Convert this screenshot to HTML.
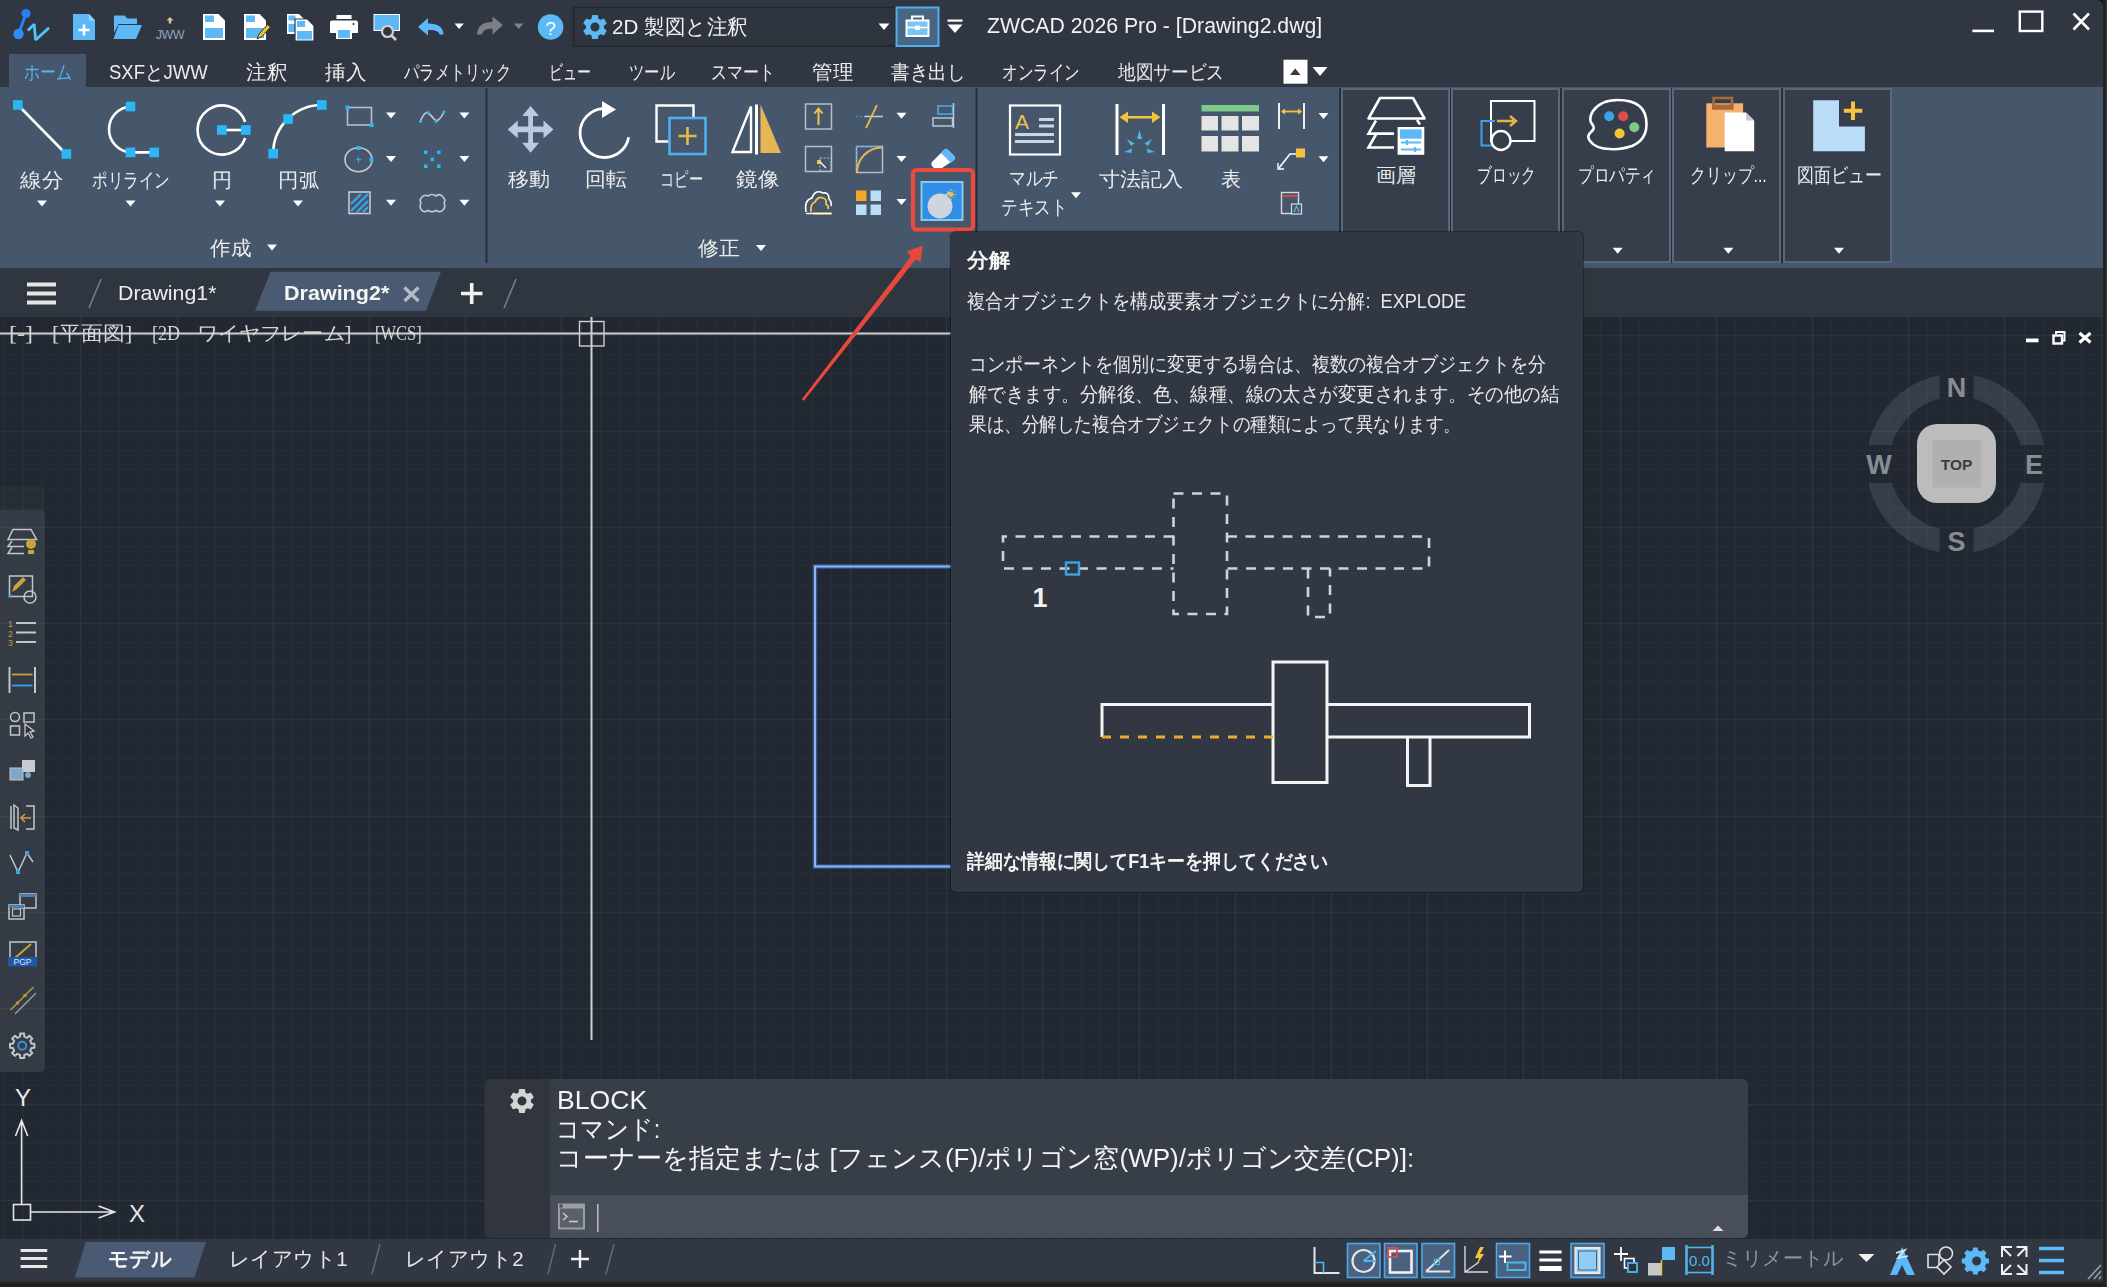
<!DOCTYPE html>
<html><head><meta charset="utf-8">
<style>
*{margin:0;padding:0;box-sizing:border-box}
html,body{width:2107px;height:1287px;overflow:hidden;background:#15171b;font-family:"Liberation Sans",sans-serif;color:#ececec}
.a{position:absolute}
.t{position:absolute;white-space:nowrap;line-height:1}
svg{position:absolute;overflow:visible}
</style></head><body>
<!-- BACKGROUNDS -->
<div class="a" style="left:0;top:0;width:2103px;height:87px;background:#313742;border-top-right-radius:6px"></div>
<div class="a" style="left:0;top:87px;width:2103px;height:181px;background:#46566b"></div>
<div class="a" style="left:0;top:268px;width:2103px;height:49px;background:#30363f"></div>
<div class="a" id="canvas" style="left:0;top:317px;width:2103px;height:922px;background:#222831;overflow:hidden">
<svg width="2103" height="922" style="left:0;top:0">
<path d="M3.5 0V922M23.5 0V922M42.5 0V922M61.5 0V922M100.5 0V922M119.5 0V922M138.5 0V922M157.5 0V922M196.5 0V922M215.5 0V922M234.5 0V922M254.5 0V922M292.5 0V922M311.5 0V922M331.5 0V922M350.5 0V922M388.5 0V922M407.5 0V922M427.5 0V922M446.5 0V922M484.5 0V922M504.5 0V922M523.5 0V922M542.5 0V922M581.5 0V922M600.5 0V922M619.5 0V922M638.5 0V922M677.5 0V922M696.5 0V922M715.5 0V922M735.5 0V922M773.5 0V922M792.5 0V922M812.5 0V922M831.5 0V922M869.5 0V922M888.5 0V922M908.5 0V922M927.5 0V922M965.5 0V922M985.5 0V922M1004.5 0V922M1023.5 0V922M1062.5 0V922M1081.5 0V922M1100.5 0V922M1119.5 0V922M1158.5 0V922M1177.5 0V922M1196.5 0V922M1216.5 0V922M1254.5 0V922M1273.5 0V922M1293.5 0V922M1312.5 0V922M1350.5 0V922M1369.5 0V922M1389.5 0V922M1408.5 0V922M1446.5 0V922M1466.5 0V922M1485.5 0V922M1504.5 0V922M1543.5 0V922M1562.5 0V922M1581.5 0V922M1600.5 0V922M1639.5 0V922M1658.5 0V922M1677.5 0V922M1697.5 0V922M1735.5 0V922M1754.5 0V922M1774.5 0V922M1793.5 0V922M1831.5 0V922M1850.5 0V922M1870.5 0V922M1889.5 0V922M1927.5 0V922M1947.5 0V922M1966.5 0V922M1985.5 0V922M2024.5 0V922M2043.5 0V922M2062.5 0V922M2081.5 0V922M0 37.5H2103M0 56.5H2103M0 75.5H2103M0 95.5H2103M0 133.5H2103M0 152.5H2103M0 172.5H2103M0 191.5H2103M0 229.5H2103M0 248.5H2103M0 268.5H2103M0 287.5H2103M0 325.5H2103M0 345.5H2103M0 364.5H2103M0 383.5H2103M0 422.5H2103M0 441.5H2103M0 460.5H2103M0 479.5H2103M0 518.5H2103M0 537.5H2103M0 556.5H2103M0 576.5H2103M0 614.5H2103M0 633.5H2103M0 653.5H2103M0 672.5H2103M0 710.5H2103M0 729.5H2103M0 749.5H2103M0 768.5H2103M0 806.5H2103M0 826.5H2103M0 845.5H2103M0 864.5H2103M0 903.5H2103M0 922.5H2103" stroke="#282e37" stroke-width="1" fill="none"/>
<path d="M80.5 0V922M177.5 0V922M273.5 0V922M369.5 0V922M465.5 0V922M561.5 0V922M658.5 0V922M754.5 0V922M850.5 0V922M946.5 0V922M1042.5 0V922M1139.5 0V922M1235.5 0V922M1331.5 0V922M1427.5 0V922M1523.5 0V922M1620.5 0V922M1716.5 0V922M1812.5 0V922M1908.5 0V922M2004.5 0V922M2101.5 0V922M0 18.5H2103M0 114.5H2103M0 210.5H2103M0 306.5H2103M0 402.5H2103M0 499.5H2103M0 595.5H2103M0 691.5H2103M0 787.5H2103M0 883.5H2103" stroke="#2e343f" stroke-width="1.6" fill="none"/>
</svg>
</div>
<div class="a" style="left:0;top:1239px;width:2103px;height:41.5px;background:#323843"></div>
<div class="a" style="left:0;top:1280.5px;width:2107px;height:2.5px;background:#2c2c2c"></div>
<div class="a" style="left:0;top:1283px;width:2107px;height:4px;background:#1f1f1f"></div>
<div class="a" style="left:2103px;top:0;width:4px;height:1287px;background:#222428"></div>
<div class="a" style="left:2105.5px;top:0;width:1.5px;height:1287px;background:#3a3a3b"></div>

<!-- TITLEBAR -->
<svg width="2107" height="50" style="left:0;top:0">
 <!-- logo -->
 <line x1="26" y1="13.5" x2="18.5" y2="34" stroke="#2a7ff0" stroke-width="3"/>
 <circle cx="26" cy="13.5" r="4.6" fill="#2a7ff0"/>
 <circle cx="18.5" cy="34" r="5.2" fill="#2b8ef2"/>
 <polyline points="27.8,30.6 34.2,24.2 35.6,39.9 49.1,27.8" stroke="#4fc3f7" stroke-width="2.8" fill="none" stroke-linejoin="bevel"/>
 <!-- new -->
 <path d="M73 14H89L95 20.5V40H73Z" fill="#5cb9f6"/>
 <path d="M89 14V20.5H95Z" fill="#9ad4fa"/>
 <path d="M84 24.5V35.5M78.5 30H89.5" stroke="#fff" stroke-width="2.6"/>
 <!-- open -->
 <path d="M114 15.5H124.5L127.5 18.5H137V24H118.5L114 33Z" fill="#5cb9f6"/>
 <path d="M118.5 25H142L136 39H113.5Z" fill="#5cb9f6"/>
 <!-- jww -->
 <path d="M170 17L166.5 20.5H168.8V23.5H171.2V20.5H173.5Z" fill="#d7c69a"/>
 <text x="170" y="39" font-size="12.5" fill="#8da3bf" text-anchor="middle" font-family="Liberation Sans" letter-spacing="-0.5">JWW</text>
 <!-- save -->
 <path d="M203 14H218.5L225 20.5V40H203Z" fill="#fff"/>
 <rect x="205" y="15.5" width="9" height="6.5" fill="#5cb9f6"/>
 <rect x="205" y="28" width="18" height="10" fill="#5cb9f6"/>
 <!-- save as -->
 <path d="M244 14H259.5L266 20.5V40H244Z" fill="#fff"/>
 <rect x="246" y="15.5" width="9" height="6.5" fill="#5cb9f6"/>
 <rect x="246" y="28" width="18" height="10" fill="#5cb9f6"/>
 <path d="M257 39L259 34L267.5 24.5L270.5 27L262 36.5Z" fill="#f2c12e" stroke="#2f343e" stroke-width="1"/>
 <!-- save multiple -->
 <path d="M287 14H299L304 19V34H287Z" fill="#fff"/>
 <rect x="288.5" y="15.5" width="7" height="5" fill="#5cb9f6"/>
 <rect x="288.5" y="24" width="14" height="8" fill="#5cb9f6"/>
 <path d="M295 19H307.5L314 25.5V41H295Z" fill="#fff" stroke="#2f343e" stroke-width="1.2"/>
 <rect x="297" y="21" width="8" height="6" fill="#5cb9f6"/>
 <rect x="297" y="31" width="15" height="8.5" fill="#5cb9f6"/>
 <!-- print -->
 <rect x="336.5" y="15" width="15" height="4" fill="#fff"/>
 <path d="M330 22.5Q330 20.5 332 20.5H356Q358 20.5 358 22.5V33H330Z" fill="#fff"/>
 <rect x="336" y="28" width="16" height="11" fill="#fff"/>
 <rect x="338" y="30" width="12" height="8" fill="#5cb9f6"/>
 <circle cx="353.5" cy="24" r="1" fill="#2f343e"/>
 <!-- plot preview -->
 <rect x="373.5" y="14" width="26.5" height="17" fill="#fff"/>
 <rect x="374.5" y="15" width="24.5" height="15" fill="#5cb9f6"/>
 <circle cx="387.5" cy="31.5" r="5.5" fill="#2f343e" stroke="#d0d0d0" stroke-width="2.2"/>
 <line x1="391.5" y1="35.5" x2="396" y2="40" stroke="#d0d0d0" stroke-width="2.6"/>
 <!-- undo -->
 <path d="M418 27L428 18V23.5Q443 23.5 443.5 34.5H439.5Q439 29.5 428 30V35.5Z" fill="#5cb9f6"/>
 <path d="M454.5 23.5H463.8L459.1 29Z" fill="#fff"/>
 <!-- redo -->
 <path d="M503 25L492.5 16.5V22Q477.5 22 477 34.5H482Q482.5 28.5 492.5 28.5V34.5Z" fill="#7c7f85"/>
 <path d="M514 23.5H523.5L518.7 29Z" fill="#808389"/>
 <!-- help -->
 <circle cx="550.6" cy="27" r="12.8" fill="#5cb9f6"/>
 <text x="550.6" y="34.5" font-size="19" fill="#fff" text-anchor="middle" font-family="Liberation Sans">?</text>
 <!-- combo -->
 <rect x="573.5" y="7.5" width="322" height="38.5" fill="#2f353f" stroke="#22262d" stroke-width="1.5"/>
 <path d="M878.5 23.5H889.5L884 30Z" fill="#fff"/>
 <!-- toolbox -->
 <rect x="896.5" y="7.5" width="42" height="38.5" fill="#476684" stroke="#4fb0ee" stroke-width="2"/>
 <rect x="906.5" y="20.5" width="22" height="15.5" fill="#7cc4f2" stroke="#fff" stroke-width="2"/>
 <path d="M912 20V16.5H923V20" stroke="#fff" stroke-width="2" fill="none"/>
 <path d="M906.5 27.5H928.5" stroke="#fff" stroke-width="1.6"/>
 <rect x="915" y="25.5" width="5" height="4.5" fill="#fff"/>
 <!-- workspace menu -->
 <rect x="947.5" y="19.5" width="15" height="2.2" fill="#fff"/>
 <path d="M947.5 24.5H962.5L955 33Z" fill="#fff"/>
 <!-- window controls -->
 <rect x="1972.4" y="29.6" width="21.6" height="2.6" fill="#fff"/>
 <rect x="2019.8" y="11.6" width="22.5" height="19.4" fill="none" stroke="#fff" stroke-width="2.4"/>
 <path d="M2073.5 13.5L2089 29.5M2089 13.5L2073.5 29.5" stroke="#fff" stroke-width="2.6"/>
</svg>
<!-- gear in combo -->
<svg width="30" height="30" style="left:580px;top:12px" viewBox="0 0 24 24">
 <path fill="#5cb9f6" d="M19.14 12.94c.04-.3.06-.61.06-.94 0-.32-.02-.64-.07-.94l2.03-1.58a.49.49 0 0 0 .12-.61l-1.92-3.32a.49.49 0 0 0-.59-.22l-2.39.96c-.5-.38-1.03-.7-1.62-.94l-.36-2.54a.48.48 0 0 0-.48-.41h-3.84c-.24 0-.43.17-.47.41l-.36 2.54c-.59.24-1.13.57-1.62.94l-2.39-.96a.48.48 0 0 0-.59.22L2.74 8.87c-.12.21-.08.47.12.61l2.03 1.58c-.05.3-.09.63-.09.94s.02.64.07.94l-2.03 1.58a.49.49 0 0 0-.12.61l1.92 3.32c.12.22.37.29.59.22l2.39-.96c.5.38 1.03.7 1.62.94l.36 2.54c.05.24.24.41.48.41h3.84c.24 0 .44-.17.47-.41l.36-2.54c.59-.24 1.13-.56 1.62-.94l2.39.96c.22.08.47 0 .59-.22l1.92-3.32c.12-.22.07-.47-.12-.61l-2.01-1.58zM12 15.6A3.6 3.6 0 1 1 12 8.4a3.6 3.6 0 0 1 0 7.2z"/>
</svg>
<div class="t" style="left:612px;top:16px;font-size:21px;color:#f2f2f2;--w:136;transform:scaleX(0.9784);transform-origin:0 50%">2D 製図と注釈</div>
<div class="t" style="left:987px;top:15px;font-size:22px;color:#f2f2f2;--w:335;transform:scaleX(0.9654);transform-origin:0 50%">ZWCAD 2026 Pro - [Drawing2.dwg]</div>
<!--TABS-->
<div class="a" style="left:9px;top:54px;width:77px;height:33px;background:#46566d"></div>
<div class="t" style="left:24px;top:62px;font-size:20px;color:#4fb6ec;--w:48;transform:scaleX(0.8000);transform-origin:0 50%">ホーム</div>
<div class="t" style="left:109px;top:62px;font-size:20px;--w:99;transform:scaleX(0.9252);transform-origin:0 50%">SXFとJWW</div>
<div class="t" style="left:246px;top:62px;font-size:20px;--w:41;transform:scaleX(1.0250);transform-origin:0 50%">注釈</div>
<div class="t" style="left:325px;top:62px;font-size:20px;--w:41;transform:scaleX(1.0250);transform-origin:0 50%">挿入</div>
<div class="t" style="left:404px;top:62px;font-size:20px;--w:107;transform:scaleX(0.7643);transform-origin:0 50%">パラメトリック</div>
<div class="t" style="left:549px;top:62px;font-size:20px;--w:42;transform:scaleX(0.7000);transform-origin:0 50%">ビュー</div>
<div class="t" style="left:629px;top:62px;font-size:20px;--w:46;transform:scaleX(0.7667);transform-origin:0 50%">ツール</div>
<div class="t" style="left:711px;top:62px;font-size:20px;--w:64;transform:scaleX(0.8000);transform-origin:0 50%">スマート</div>
<div class="t" style="left:812px;top:62px;font-size:20px;--w:41;transform:scaleX(1.0250);transform-origin:0 50%">管理</div>
<div class="t" style="left:891px;top:62px;font-size:20px;--w:74;transform:scaleX(0.9250);transform-origin:0 50%">書き出し</div>
<div class="t" style="left:1002px;top:62px;font-size:20px;--w:78;transform:scaleX(0.7800);transform-origin:0 50%">オンライン</div>
<div class="t" style="left:1118px;top:62px;font-size:20px;--w:106;transform:scaleX(0.8833);transform-origin:0 50%">地図サービス</div>
<svg width="60" height="40" style="left:1270px;top:50px">
 <rect x="13.5" y="9.7" width="24" height="24" fill="#fff"/>
 <path d="M20 25H30.5L25.2 18.5Z" fill="#3a3a3a"/>
 <path d="M42.5 17H57.5L50 26Z" fill="#fff"/>
</svg>

<!--RIBBON-->
<svg width="2107" height="280" style="left:0;top:0">
 <defs>
  <path id="dd" d="M-5 -3H5L0 3Z" fill="#fff"/>
 </defs>
 <!-- separators -->
 <rect x="485.5" y="88" width="2" height="175" fill="#2a2e34"/>
 <rect x="975.5" y="88" width="2" height="175" fill="#2a2e34"/>
 <!-- P1: line -->
 <line x1="18" y1="105" x2="66" y2="154" stroke="#fff" stroke-width="2.6"/>
 <rect x="13" y="100.2" width="9.6" height="9.6" fill="#2bb7f5"/>
 <rect x="61.6" y="149.2" width="9.6" height="9.6" fill="#2bb7f5"/>
 <!-- polyline -->
 <path d="M130.5 106.5A23 23 0 0 0 130.5 152.4H154.2" stroke="#fff" stroke-width="2.6" fill="none"/>
 <rect x="125.7" y="101.7" width="9.6" height="9.6" fill="#2bb7f5"/>
 <rect x="125.7" y="147.6" width="9.6" height="9.6" fill="#2bb7f5"/>
 <rect x="149.4" y="147.6" width="9.6" height="9.6" fill="#2bb7f5"/>
 <!-- circle -->
 <path d="M245.2 122A24.5 24.5 0 1 0 245.2 138" stroke="#fff" stroke-width="2.6" fill="none"/>
 <line x1="222" y1="130" x2="246" y2="130" stroke="#fff" stroke-width="2.6"/>
 <rect x="217" y="125.2" width="9.6" height="9.6" fill="#2bb7f5"/>
 <rect x="241" y="125.2" width="9.6" height="9.6" fill="#2bb7f5"/>
 <!-- arc -->
 <path d="M273.2 153.6A48.6 48.6 0 0 1 321.8 105" stroke="#fff" stroke-width="2.6" fill="none"/>
 <rect x="268.4" y="148.8" width="9.6" height="9.6" fill="#2bb7f5"/>
 <rect x="283.2" y="114.2" width="9.6" height="9.6" fill="#2bb7f5"/>
 <rect x="317" y="100.2" width="9.6" height="9.6" fill="#2bb7f5"/>
 <!-- small: rect -->
 <rect x="347.5" y="107.5" width="24" height="17.5" fill="none" stroke="#b8bec8" stroke-width="1.6"/>
 <rect x="345.5" y="105.5" width="4" height="4" fill="#2bb7f5"/>
 <rect x="369.5" y="123" width="4" height="4" fill="#2bb7f5"/>
 <!-- small: circle -->
 <ellipse cx="358.5" cy="159.7" rx="13.5" ry="12" fill="none" stroke="#c5cad2" stroke-width="1.6"/>
 <rect x="356.5" y="146" width="4" height="4" fill="#2bb7f5"/>
 <rect x="369.5" y="157.5" width="4" height="4" fill="#2bb7f5"/>
 <path d="M358.5 157V162.5M355.8 159.7H361.2" stroke="#2bb7f5" stroke-width="1"/>
 <!-- small: hatch -->
 <rect x="349" y="192" width="21" height="21.5" fill="none" stroke="#c5cad2" stroke-width="1.6"/>
 <path d="M351 204L361 194M351 211L368 194M357 212L368 201M363 212L368 207" stroke="#3aa3e8" stroke-width="2.4"/>
 <!-- spline -->
 <path d="M420 122Q424.5 111 428 113Q431 115 434 119Q438 124 444 112" stroke="#c5cad2" stroke-width="1.6" fill="none"/>
 <circle cx="420.5" cy="121.5" r="1.6" fill="#2bb7f5"/><circle cx="428" cy="112.5" r="1.6" fill="#2bb7f5"/><circle cx="436" cy="121.5" r="1.6" fill="#2bb7f5"/><circle cx="444" cy="112" r="1.6" fill="#2bb7f5"/>
 <!-- points -->
 <rect x="424" y="150.5" width="3.5" height="3.5" fill="#2bb7f5"/><rect x="437" y="150.5" width="3.5" height="3.5" fill="#2bb7f5"/><rect x="430.5" y="157.5" width="3.5" height="3.5" fill="#2bb7f5"/><rect x="424" y="164.5" width="3.5" height="3.5" fill="#2bb7f5"/><rect x="437" y="164.5" width="3.5" height="3.5" fill="#2bb7f5"/>
 <!-- cloud -->
 <path d="M422 197Q425 194 428 196Q432 193 436 196Q440 193 443 197Q446 200 444 203Q446 207 443 210Q440 213 436 210.5Q432 213 428 210.5Q424 213 421.5 210Q419 207 421 203Q419 200 422 197Z" fill="none" stroke="#c5cad2" stroke-width="1.6"/>
 <use href="#dd" x="391" y="115.6"/><use href="#dd" x="391" y="159"/><use href="#dd" x="391" y="202.7"/>
 <use href="#dd" x="464.4" y="115.6"/><use href="#dd" x="464.4" y="159"/><use href="#dd" x="464.4" y="202.7"/>
 <use href="#dd" x="42" y="203.5"/><use href="#dd" x="130.5" y="203.5"/><use href="#dd" x="220" y="203.5"/><use href="#dd" x="298" y="203.5"/>
 <use href="#dd" x="272" y="247.5"/>
</svg>
<div class="t" style="left:20px;top:170px;font-size:20px;--w:43;transform:scaleX(1.0750);transform-origin:0 50%">線分</div>
<div class="t" style="left:91.5px;top:170px;font-size:20px;--w:78;transform:scaleX(0.7800);transform-origin:0 50%">ポリライン</div>
<div class="t" style="left:212px;top:170px;font-size:20px;--w:20;transform:scaleX(1.0000);transform-origin:0 50%">円</div>
<div class="t" style="left:278px;top:170px;font-size:20px;--w:41;transform:scaleX(1.0250);transform-origin:0 50%">円弧</div>
<div class="t" style="left:210px;top:238px;font-size:20px;--w:41;transform:scaleX(1.0250);transform-origin:0 50%">作成</div>
<svg width="2107" height="280" style="left:0;top:0">
 <!-- move -->
 <path d="M530.6 106L539 116H533V126.5H543.5V120.5L553.5 129.4L543.5 138.3V132.3H533V142.8H539L530.6 152.8L522.2 142.8H528.2V132.3H517.7V138.3L507.7 129.4L517.7 120.5V126.5H528.2V116H522.2Z" fill="#b9cbe3"/>
 <!-- rotate -->
 <path d="M628.7 137.3A24.5 24.5 0 1 1 602.5 108.6" stroke="#fff" stroke-width="2.8" fill="none"/>
 <path d="M602 101L616 109.5L602 118Z" fill="#fff"/>
 <!-- copy -->
 <path d="M668.5 141.5H656.5V105.5H693.5V117.5" stroke="#fff" stroke-width="2.4" fill="none"/>
 <rect x="669.5" y="118" width="36" height="36" fill="none" stroke="#4fb0ee" stroke-width="2.6"/>
 <path d="M687.5 127V145M678.5 136H696.5" stroke="#e8b84a" stroke-width="2.6"/>
 <!-- mirror -->
 <path d="M751 106.5V152H732.5Z" fill="none" stroke="#fff" stroke-width="2.4" stroke-linejoin="miter"/>
 <rect x="755" y="104.5" width="3" height="50" fill="#fff"/>
 <path d="M760.5 104.5L781 153H760.5Z" fill="#e5b653"/>
 <!-- stretch -->
 <rect x="805.5" y="104" width="26" height="25" fill="none" stroke="#b8bec8" stroke-width="1.5"/>
 <path d="M818.5 125V109M814.5 113.5L818.5 108.5L822.5 113.5" stroke="#f0c24a" stroke-width="2" fill="none"/>
 <!-- scale -->
 <rect x="805.5" y="146.5" width="26" height="25" fill="none" stroke="#b8bec8" stroke-width="1.5"/>
 <rect x="820" y="158" width="11" height="13" fill="none" stroke="#b8bec8" stroke-width="1" stroke-dasharray="2 1.5"/>
 <rect x="817" y="160" width="4" height="4" fill="#f0c24a"/>
 <path d="M820 162L826 168" stroke="#fff" stroke-width="1.2"/>
 <!-- offset cloud -->
 <path d="M806 212Q804 200 812 198Q815 189 823 193Q829 192 829 199Q832 202 831 206" stroke="#fff" stroke-width="1.6" fill="none"/>
 <path d="M811 212Q810 204 815 202Q818 196 823 198Q827 199 826 204Q829 206 828 209M813 213.5H832" stroke="#f0c24a" stroke-width="1.8" fill="none"/>
 <path d="M806 213.5H831" stroke="#fff" stroke-width="1.4"/>
 <!-- trim -->
 <path d="M856 116.5H883" stroke="#3aa3e8" stroke-width="1.2" stroke-dasharray="2 2"/>
 <path d="M864.5 116.5H883" stroke="#c5cad2" stroke-width="1.6"/>
 <path d="M866 128L877 105" stroke="#e5b653" stroke-width="1.8"/>
 <!-- fillet -->
 <rect x="856.5" y="146.5" width="26" height="26" fill="none" stroke="#b8bec8" stroke-width="1.5"/>
 <path d="M857 172V146.5H882" stroke="#3aa3e8" stroke-width="1.4" stroke-dasharray="2 2" fill="none"/>
 <path d="M857 172.5A25 25 0 0 1 882 147.5" stroke="#e5b653" stroke-width="2" fill="none"/>
 <!-- array -->
 <rect x="856" y="190.5" width="10.5" height="10.5" fill="#f5a623"/>
 <rect x="870.5" y="190.5" width="10.5" height="10.5" fill="#b9dcf7"/>
 <rect x="856" y="204.5" width="10.5" height="10.5" fill="#b9dcf7"/>
 <rect x="870.5" y="204.5" width="10.5" height="10.5" fill="#b9dcf7"/>
 <use href="#dd" x="901.5" y="115.8"/><use href="#dd" x="901.5" y="159"/><use href="#dd" x="901.5" y="202"/>
 <!-- align -->
 <path d="M953.5 103V128" stroke="#c5cad2" stroke-width="1.5"/>
 <rect x="938" y="106" width="14.5" height="8" fill="none" stroke="#4fb0ee" stroke-width="1.4"/>
 <rect x="933" y="118" width="19.5" height="8" fill="none" stroke="#c5cad2" stroke-width="1.4"/>
 <!-- eraser -->
 <path d="M932 162L944 150Q946 148 948 150L954 156Q956 158 954 160L942 168H934Q930 165 932 162Z" fill="#fff"/>
 <path d="M941 153L944 150Q946 148 948 150L954 156Q956 158 954 160L951 163Z" fill="#5cb9f6"/>
 <!-- explode highlighted -->
 <rect x="913" y="170" width="60" height="59.5" rx="3.5" fill="none" stroke="#ec4a3c" stroke-width="4.2"/>
 <rect x="920.5" y="181" width="43" height="40" fill="#8cc7f0"/>
 <rect x="922.5" y="183" width="39" height="36" fill="#2f8ee6"/>
 <circle cx="940" cy="206" r="12.5" fill="#cfd5de"/>
 <path d="M945 196L950 192" stroke="#cfd5de" stroke-width="2"/>
 <circle cx="951" cy="194.5" r="2.4" fill="#f5c33b"/>
 <path d="M951 189V191M951 198V200M946 194.5H948M954 194.5H956M947.5 191L948.8 192.3M953.2 196.7L954.5 198M954.5 191L953.2 192.3M948.8 196.7L947.5 198" stroke="#f5c33b" stroke-width="1"/>
 <use href="#dd" x="761" y="248"/>
 <!-- P3: mtext -->
 <rect x="1010" y="105.5" width="50" height="49" fill="none" stroke="#fff" stroke-width="2.2"/>
 <text x="1015" y="129" font-size="21" fill="#f0c24a" font-family="Liberation Sans">A</text>
 <path d="M1039 119.5H1054M1039 126H1054M1015 134.5H1054M1015 141.5H1054" stroke="#c8d6ea" stroke-width="3"/>
 <use href="#dd" x="1076" y="195.2"/>
 <!-- dim -->
 <rect x="1115.5" y="104" width="3" height="51" fill="#fff"/>
 <rect x="1162" y="104" width="3" height="51" fill="#fff"/>
 <path d="M1122 117.2H1157" stroke="#f5c33b" stroke-width="2.4"/>
 <path d="M1119.5 117.2L1128 111.5V123Z M1160.5 117.2L1152 111.5V123Z" fill="#f5c33b"/>
 <path d="M1139.5 130L1142 139H1137Z M1127 139L1134.5 143.5L1131 146Z M1152 139L1144.5 143.5L1148 146Z M1124 152L1132 148.5L1131.5 153Z M1155 152L1147 148.5L1147.5 153Z" fill="#4fb6ec"/>
 <!-- table -->
 <rect x="1201.5" y="105" width="57.5" height="6.5" fill="#7cc98a"/>
 <rect x="1201.5" y="116" width="16.5" height="14.5" fill="#e4e4e4"/><rect x="1221.5" y="116" width="17" height="14.5" fill="#e4e4e4"/><rect x="1242" y="116" width="17" height="14.5" fill="#e4e4e4"/>
 <rect x="1201.5" y="136" width="16.5" height="15.5" fill="#e4e4e4"/><rect x="1221.5" y="136" width="17" height="15.5" fill="#e4e4e4"/><rect x="1242" y="136" width="17" height="15.5" fill="#e4e4e4"/>
 <!-- small dim -->
 <path d="M1279 103V129M1304 103V129" stroke="#fff" stroke-width="1.8"/>
 <path d="M1282 111.5H1301" stroke="#f5c33b" stroke-width="1.8"/>
 <path d="M1281 111.5L1285 108.5V114.5Z M1302 111.5L1298 108.5V114.5Z" fill="#f5c33b"/>
 <use href="#dd" x="1323.5" y="116"/>
 <!-- leader -->
 <path d="M1279 168L1290 154H1296" stroke="#fff" stroke-width="1.6" fill="none"/>
 <path d="M1278 163V169H1284" stroke="#fff" stroke-width="1.4" fill="none"/>
 <rect x="1296" y="148.5" width="9" height="9" fill="#f5c33b"/>
 <use href="#dd" x="1323.5" y="159.2"/>
 <!-- field -->
 <rect x="1281.5" y="192.5" width="17" height="21" fill="none" stroke="#d5d9df" stroke-width="1.4"/>
 <rect x="1283" y="195" width="14" height="1.8" fill="#e24a4a"/>
 <rect x="1291.5" y="204" width="10" height="10" fill="#46566d" stroke="#d5d9df" stroke-width="1.2"/>
 <path d="M1294 212L1296.5 206L1299 212" stroke="#4fb6ec" stroke-width="1.2" fill="none"/>
</svg>
<div class="t" style="left:508px;top:169px;font-size:20px;--w:42;transform:scaleX(1.0500);transform-origin:0 50%">移動</div>
<div class="t" style="left:585px;top:169px;font-size:20px;--w:42;transform:scaleX(1.0500);transform-origin:0 50%">回転</div>
<div class="t" style="left:660px;top:169px;font-size:20px;--w:43;transform:scaleX(0.7167);transform-origin:0 50%">コピー</div>
<div class="t" style="left:735.5px;top:169px;font-size:20px;--w:43;transform:scaleX(1.0750);transform-origin:0 50%">鏡像</div>
<div class="t" style="left:698px;top:238px;font-size:20px;--w:42;transform:scaleX(1.0500);transform-origin:0 50%">修正</div>
<div class="t" style="left:1009px;top:168px;font-size:20px;--w:50;transform:scaleX(0.8333);transform-origin:0 50%">マルチ</div>
<div class="t" style="left:1001px;top:197px;font-size:20px;--w:66;transform:scaleX(0.8250);transform-origin:0 50%">テキスト</div>
<div class="t" style="left:1099px;top:169px;font-size:20px;--w:84;transform:scaleX(1.0500);transform-origin:0 50%">寸法記入</div>
<div class="t" style="left:1220.5px;top:169px;font-size:20px;--w:20;transform:scaleX(1.0000);transform-origin:0 50%">表</div>
<div class="a" style="left:1338.6px;top:87.5px;width:553.4px;height:175.2px;background:#2a2f36"></div>
<div class="a" style="left:1340.8px;top:87.7px;width:108.8px;height:175px;background:#363e4c;border:2.3px solid #5b6679"></div>
<div class="a" style="left:1451.3px;top:87.7px;width:108.8px;height:175px;background:#363e4c;border:2.3px solid #5b6679"></div>
<div class="a" style="left:1561.8px;top:87.7px;width:108.8px;height:175px;background:#363e4c;border:2.3px solid #5b6679"></div>
<div class="a" style="left:1672.3px;top:87.7px;width:108.8px;height:175px;background:#363e4c;border:2.3px solid #5b6679"></div>
<div class="a" style="left:1782.8px;top:87.7px;width:109.2px;height:175px;background:#363e4c;border:2.3px solid #5b6679"></div>
<svg width="2107" height="280" style="left:0;top:0">
 <!-- layer -->
 <path d="M1380 98H1413L1424.5 118.5H1368.5Z" fill="none" stroke="#fff" stroke-width="2.6" stroke-linejoin="round"/>
 <path d="M1376 120.5L1368.5 133.6H1394M1376 134.5L1368.5 147.5H1394M1417 120L1420 124.5" fill="none" stroke="#fff" stroke-width="2.6"/>
 <rect x="1397.6" y="127" width="26.7" height="27.8" fill="#fff"/>
 <rect x="1400" y="129.4" width="21.7" height="9.3" fill="#5cb9f6"/>
 <path d="M1401 142.5H1421M1401 149.5H1421" stroke="#5cb9f6" stroke-width="1.8"/>
 <path d="M1407 140V145M1415 147V152" stroke="#5cb9f6" stroke-width="2.2"/>
 <!-- block -->
 <rect x="1491" y="101" width="43.5" height="40" fill="none" stroke="#fff" stroke-width="2"/>
 <path d="M1495 121H1481.5V145.5H1492" fill="none" stroke="#3aa3e8" stroke-width="2"/>
 <circle cx="1501" cy="140.5" r="9.5" fill="#363e4c" stroke="#fff" stroke-width="2.4"/>
 <path d="M1497 121H1515M1510 116L1516 121L1510 126" fill="none" stroke="#e9b04a" stroke-width="2.4"/>
 <!-- properties palette -->
 <path d="M1617.7 100Q1646.5 100 1646.5 124Q1646.5 140 1632 146Q1620 150 1610 149Q1596 149 1590 141Q1586 136 1591 132Q1596 128 1592 124Q1588 119 1593 111Q1601 100 1617.7 100Z" fill="none" stroke="#fff" stroke-width="2.6"/>
 <circle cx="1609.2" cy="116.2" r="5" fill="#3aa3e8"/>
 <circle cx="1623.2" cy="116.2" r="5" fill="#e24a4a"/>
 <circle cx="1634.3" cy="127.3" r="5" fill="#7cc98a"/>
 <circle cx="1619.6" cy="133.5" r="5" fill="#f5c33b"/>
 <!-- clipboard -->
 <rect x="1706.3" y="103.3" width="36.8" height="44.2" fill="#f4b26e"/>
 <rect x="1713.6" y="98" width="18.4" height="10.5" fill="none" stroke="#a86a3c" stroke-width="2.6"/>
 <rect x="1712" y="104.5" width="21.5" height="4.5" fill="#a86a3c"/>
 <path d="M1724.7 112.5H1746L1754.2 120.5V151.2H1724.7Z" fill="#fff"/>
 <path d="M1746 112.5V120.5H1754.2" fill="#c7ccd4"/>
 <!-- drawing view -->
 <path d="M1813.2 100.3H1839V126.5H1864.9V151.2H1813.2Z" fill="#b9dcf7"/>
 <path d="M1853 101.5V120M1843.8 110.7H1862.3" stroke="#f5c33b" stroke-width="4"/>
 <use href="#dd" x="1617.7" y="250.8"/><use href="#dd" x="1728.4" y="250.8"/><use href="#dd" x="1839" y="250.8"/>
</svg>
<div class="t" style="left:1376px;top:165px;font-size:20px;--w:40;transform:scaleX(1.0000);transform-origin:0 50%">画層</div>
<div class="t" style="left:1477px;top:165px;font-size:20px;--w:59;transform:scaleX(0.7375);transform-origin:0 50%">ブロック</div>
<div class="t" style="left:1578px;top:165px;font-size:20px;--w:78;transform:scaleX(0.7800);transform-origin:0 50%">プロパティ</div>
<div class="t" style="left:1689.6px;top:165px;font-size:20px;--w:77;transform:scaleX(0.7938);transform-origin:0 50%">クリップ...</div>
<div class="t" style="left:1796.6px;top:165px;font-size:20px;--w:85;transform:scaleX(0.8500);transform-origin:0 50%">図面ビュー</div>
<!--RIBBON3-->
<!--DOCTABS-->
<svg width="2107" height="50" style="left:0;top:268px">
 <path d="M27 16.5H56M27 25.5H56M27 34.5H56" stroke="#e6e6e6" stroke-width="3.8"/>
 <path d="M101 11L89 40" stroke="#6f7e93" stroke-width="1.6"/>
 <path d="M270.5 3.7H441L426 42.7H255Z" fill="#4a5a73"/>
 <path d="M404.5 19.5L418.5 33M418.5 19.5L404.5 33" stroke="#b5bac2" stroke-width="3.4"/>
 <path d="M471.7 15V36M461 25.5H482.5" stroke="#f2f2f2" stroke-width="3.6"/>
 <path d="M516 11L504 40" stroke="#6f7e93" stroke-width="1.6"/>
</svg>
<div class="t" style="left:118px;top:283px;font-size:20.5px;color:#ececec;--w:99;transform:scaleX(1.0421);transform-origin:0 50%">Drawing1*</div>
<div class="t" style="left:283.6px;top:283px;font-size:20.5px;color:#f4f4f4;font-weight:bold;--w:105;transform:scaleX(1.0500);transform-origin:0 50%">Drawing2*</div>
<!--CANVASITEMS-->
<!-- left tool palette -->
<div class="a" style="left:0;top:486px;width:45px;height:586px;background:rgba(255,255,255,0.025);border-radius:0 5px 5px 0"></div>
<div class="a" style="left:0;top:509.6px;width:45px;height:562px;background:rgba(120,130,145,0.17);border-radius:0 5px 5px 0"></div>
<svg width="2107" height="1287" style="left:0;top:0">
 <!-- crosshair -->
 <rect x="0" y="332.5" width="1300" height="2" fill="#cfcfcf"/>
 <rect x="590.5" y="317" width="2" height="723" fill="#cfcfcf"/>
 <rect x="579.5" y="321.5" width="24.5" height="24.5" fill="none" stroke="#cfcfcf" stroke-width="1.4"/>
 <!-- blue rectangle -->
 <path d="M1000 566.5H815V866.5H1000" fill="none" stroke="#3f78e0" stroke-width="4.5" opacity="0.55"/>
 <path d="M1000 566.5H815V866.5H1000" fill="none" stroke="#8fb4f4" stroke-width="2"/>
 <!-- UCS -->
 <path d="M21.6 1204.5V1120.5M15.5 1136L21.6 1120.5L27.7 1136" fill="none" stroke="#e6e6e6" stroke-width="1.6"/>
 <rect x="13.5" y="1204.5" width="17" height="15.5" fill="none" stroke="#e6e6e6" stroke-width="1.6"/>
 <path d="M30.5 1212H114M98.5 1206L114.5 1212L98.5 1218" fill="none" stroke="#e6e6e6" stroke-width="1.6"/>
 <!-- viewport controls -->
 <rect x="2026" y="338.5" width="12.5" height="3.8" fill="#fff"/>
 <rect x="2053.5" y="335.5" width="8.5" height="8" fill="none" stroke="#fff" stroke-width="2.4"/>
 <path d="M2056 334V332H2064.5V340.5H2063" fill="none" stroke="#fff" stroke-width="2"/>
 <path d="M2079.5 333L2090.5 342.5M2090.5 333L2079.5 342.5" stroke="#fff" stroke-width="3"/>
 <!-- compass -->
 <mask id="cm"><rect x="1850" y="360" width="220" height="210" fill="#fff"/><rect x="1939.5" y="360" width="34" height="210" fill="#000"/><rect x="1850" y="445" width="220" height="38" fill="#000"/></mask>
 <circle cx="1956.3" cy="463.8" r="78.5" fill="none" stroke="rgba(125,135,150,0.24)" stroke-width="23" mask="url(#cm)"/>
 <rect x="1917" y="424" width="79" height="79" rx="20" fill="#bcbcbc"/>
 <rect x="1932.5" y="440" width="48.5" height="47.5" fill="#b0b0b0"/>
 <text x="1956.5" y="470" font-size="15.5" fill="#3c3c3c" text-anchor="middle" font-family="Liberation Sans" font-weight="bold">TOP</text>
 <g font-family="Liberation Sans" font-size="27" font-weight="bold" fill="#868c94" text-anchor="middle">
  <text x="1956.5" y="396.5">N</text>
  <text x="1956.5" y="551">S</text>
  <text x="1879" y="473.5">W</text>
  <text x="2034" y="473.5">E</text>
 </g>
 <!-- red arrow -->
 <path d="M801.8 399.2L911 256.2L906.5 251.5L922.8 245.5L920.5 262L915.6 259.6L804 400.8Z" fill="#e8483c"/>
</svg>
<div class="t" style="left:9px;top:323px;font-size:20px;font-family:'Liberation Serif',serif;color:#d6d6d6;--w:24;transform:scaleX(1.2000);transform-origin:0 50%">[-]</div><div class="t" style="left:52px;top:323px;font-size:20px;font-family:'Liberation Serif',serif;color:#d6d6d6;--w:80;transform:scaleX(1.0959);transform-origin:0 50%">[平面図]</div><div class="t" style="left:152px;top:323px;font-size:20px;font-family:'Liberation Serif',serif;color:#d6d6d6;--w:28;transform:scaleX(0.9032);transform-origin:0 50%">[2D</div><div class="t" style="left:197px;top:323px;font-size:20px;font-family:'Liberation Serif',serif;color:#d6d6d6;--w:155;transform:scaleX(1.0544);transform-origin:0 50%">ワイヤフレーム]</div><div class="t" style="left:374.5px;top:323px;font-size:20px;font-family:'Liberation Serif',serif;color:#d6d6d6;--w:47;transform:scaleX(0.8246);transform-origin:0 50%">[WCS]</div>
<div class="t" style="left:15px;top:1086px;font-size:24px;color:#e6e6e6">Y</div>
<div class="t" style="left:129px;top:1202px;font-size:24px;color:#e6e6e6">X</div>
<!--LEFTICONS-->
<svg width="60" height="1100" style="left:0;top:0">
 <g fill="none" stroke="#c2c6cc" stroke-width="1.5">
  <!-- 1 layers bulb -->
  <path d="M13 529.5H31L36.5 539.5H8Z M12 541L8 546.5H24 M12 547.5L8 553.5H24"/>
  <!-- 2 pencil square circle -->
  <path d="M9.5 576V596.5H32.5V576H9.5Z"/>
  <circle cx="30" cy="597" r="6"/>
  <!-- 3 list -->
  <path d="M16 623H36M16 632.5H36M16 642H36" stroke-width="2"/>
  <!-- 4 dim -->
  <path d="M9.5 667V693M35 667V693" stroke-width="2"/>
  <!-- 5 select -->
  <circle cx="15" cy="717" r="4.5"/>
  <rect x="10.5" y="726" width="9" height="9"/>
  <rect x="24" y="713" width="10" height="9"/>
  <!-- 7 import -->
  <path d="M11 806V829M14 805L18 808V830L14 828Z M26 806H34V829H26"/>
  <!-- 9 windows -->
  <rect x="9" y="905" width="15" height="14"/>
  <rect x="20" y="894" width="16" height="14"/>
  <!-- 10 pgp -->
  <rect x="10" y="942" width="26" height="22"/>
  <!-- 11 -->
  <path d="M15 1014L36 993" stroke="#9aa0a8"/>
 </g>
 <!-- bulb -->
 <circle cx="31" cy="544" r="5" fill="#c9a23a"/>
 <rect x="28" y="550" width="6" height="4" fill="#c9a23a"/>
 <!-- pencil -->
 <path d="M12 592L14 586L23 577L26 580L17 589Z" fill="#c9a23a"/>
 <rect x="8.5" y="594.5" width="3" height="3" fill="#3aa3e8"/>
 <!-- list numbers -->
 <text x="8" y="627" font-size="8.5" fill="#c9a23a" font-family="Liberation Sans">1</text>
 <text x="8" y="636.5" font-size="8.5" fill="#c9a23a" font-family="Liberation Sans">2</text>
 <text x="8" y="646" font-size="8.5" fill="#c9a23a" font-family="Liberation Sans">3</text>
 <!-- dim arrows -->
 <path d="M12 674.5H32.5" stroke="#c9a23a" stroke-width="1.8"/>
 <path d="M12 685.5H32.5" stroke="#3aa3e8" stroke-width="1.8"/>
 <!-- cursor -->
 <path d="M25 724L34 731L30 732L33 737L31 738L28 733L25 736Z" fill="#2d333c" stroke="#c2c6cc" stroke-width="1.3"/>
 <!-- 6 blocks -->
 <rect x="22" y="760" width="13" height="12" fill="#c8ccd2"/>
 <rect x="10" y="768" width="13" height="12" fill="#7fa6c8" stroke="#c2c6cc" stroke-width="1"/>
 <circle cx="28" cy="775" r="3" fill="#7fa6c8"/>
 <!-- import arrow -->
 <path d="M31 818H21M25 814L21 818L25 822" fill="none" stroke="#c9a23a" stroke-width="1.6"/>
 <!-- polyline dots -->
 <path d="M10 855L18 872L27 853L33 862" fill="none" stroke="#c2c6cc" stroke-width="1.5"/>
 <rect x="16" y="870" width="4" height="4" fill="#3aa3e8"/>
 <rect x="25" y="851" width="4" height="4" fill="#3aa3e8"/>
 <!-- windows tint -->
 <rect x="9" y="905" width="15" height="3" fill="#4a7eb0"/>
 <rect x="20" y="894" width="16" height="3" fill="#4a7eb0"/>
 <rect x="12.5" y="909" width="8" height="7" fill="none" stroke="#c2c6cc" stroke-width="1.2"/>
 <!-- pgp -->
 <path d="M15 958L31 944" stroke="#c9a23a" stroke-width="2"/>
 <rect x="8" y="957" width="29" height="9.5" fill="#1f57a8"/>
 <text x="22.5" y="965" font-size="8.5" fill="#dfe8f5" text-anchor="middle" font-family="Liberation Sans">PGP</text>
 <!-- ruler -->
 <path d="M10.5 1010L33.5 987" stroke="#b8963a" stroke-width="1.6"/>
 <circle cx="17.5" cy="1003" r="1.8" fill="#b8963a"/><circle cx="25" cy="995.5" r="1.8" fill="#b8963a"/>
 <!-- gear -->
 <path d="M31.4 1043.7L34.4 1043.8L34.4 1047.8L31.4 1047.9L30.2 1050.8L32.3 1053.0L29.4 1055.9L27.2 1053.8L24.3 1055.0L24.2 1058.0L20.2 1058.0L20.1 1055.0L17.2 1053.8L15.0 1055.9L12.1 1053.0L14.2 1050.8L13.0 1047.9L10.0 1047.8L10.0 1043.8L13.0 1043.7L14.2 1040.8L12.1 1038.6L15.0 1035.7L17.2 1037.8L20.1 1036.6L20.2 1033.6L24.2 1033.6L24.3 1036.6L27.2 1037.8L29.4 1035.7L32.3 1038.6L30.2 1040.8Z" fill="none" stroke="#c2c6cc" stroke-width="2" stroke-linejoin="round"/>
 <circle cx="22.2" cy="1045.8" r="4" fill="none" stroke="#3a8fd0" stroke-width="2"/>
</svg>
<!-- right edge markers -->

<!--TOOLTIP-->
<div class="a" style="left:950.8px;top:232px;width:632.5px;height:660px;background:#323843;border-radius:5px;box-shadow:0 0 1px 1px rgba(20,23,28,0.6)"></div>
<div class="t" style="left:967px;top:250px;font-size:20px;font-weight:bold;color:#f4f4f4;--w:43;transform:scaleX(1.0750);transform-origin:0 50%">分解</div>
<div class="t" style="left:967px;top:291px;font-size:20px;color:#e8e8e8;--w:499;transform:scaleX(0.9056);transform-origin:0 50%">複合オブジェクトを構成要素オブジェクトに分解:&nbsp; EXPLODE</div>
<div class="t" style="left:969px;top:354px;font-size:20px;color:#e8e8e8;--w:577;transform:scaleX(0.9016);transform-origin:0 50%">コンポーネントを個別に変更する場合は、複数の複合オブジェクトを分</div>
<div class="t" style="left:969px;top:384px;font-size:20px;color:#e8e8e8;--w:590;transform:scaleX(0.9219);transform-origin:0 50%">解できます。分解後、色、線種、線の太さが変更されます。その他の結</div>
<div class="t" style="left:969px;top:414px;font-size:20px;color:#e8e8e8;--w:492;transform:scaleX(0.8786);transform-origin:0 50%">果は、分解した複合オブジェクトの種類によって異なります。</div>
<svg width="2107" height="1287" style="left:0;top:0">
 <g fill="none" stroke="#cfd2d6" stroke-width="2.6" stroke-dasharray="10 8.5">
  <path d="M1173.5 536.5H1003V568.5H1173.5"/>
  <path d="M1227 536.5H1429V568.5H1227"/>
  <path d="M1173.5 493.5H1227V614H1173.5Z"/>
  <path d="M1308 568.5V617H1330V568.5"/>
 </g>
 <rect x="1066" y="562.5" width="13" height="12" fill="none" stroke="#3aa3e8" stroke-width="2.4"/>
 <text x="1040" y="607" font-size="27" font-weight="bold" fill="#f0f0f0" text-anchor="middle" font-family="Liberation Sans">1</text>
 <g fill="none" stroke="#f4f4f4" stroke-width="3">
  <path d="M1273 704.5H1102V737"/>
  <path d="M1327 704.5H1529.5V737H1327"/>
  <path d="M1273 662H1327V782.5H1273Z"/>
  <path d="M1407.5 737V785.5H1430V737"/>
 </g>
 <path d="M1102 737H1273" fill="none" stroke="#f0a830" stroke-width="3" stroke-dasharray="9 9"/>
</svg>
<div class="t" style="left:967px;top:851px;font-size:20px;font-weight:bold;color:#f4f4f4;--w:361;transform:scaleX(0.8958);transform-origin:0 50%">詳細な情報に関してF1キーを押してください</div>
<!--TOOLTIPEND-->
<!--CMD-->
<div class="a" style="left:485px;top:1078.5px;width:1262.6px;height:159.5px;background:#30353e;border-radius:6px;overflow:hidden">
 <div class="a" style="left:65px;top:0;width:1200px;height:116.5px;background:#383e48"></div>
 <div class="a" style="left:65px;top:116.5px;width:1200px;height:43px;background:#494f5a"></div>
</div>
<svg width="30" height="30" style="left:507px;top:1086px" viewBox="0 0 24 24">
 <path fill="#d4d4d4" d="M19.14 12.94c.04-.3.06-.61.06-.94 0-.32-.02-.64-.07-.94l2.03-1.58a.49.49 0 0 0 .12-.61l-1.92-3.32a.49.49 0 0 0-.59-.22l-2.39.96c-.5-.38-1.030-.7-1.62-.94l-.36-2.54a.48.48 0 0 0-.48-.41h-3.84c-.24 0-.43.17-.47.41l-.36 2.54c-.59.24-1.13.57-1.62.94l-2.39-.96a.48.48 0 0 0-.59.22L2.74 8.87c-.12.21-.08.47.12.61l2.03 1.58c-.05.3-.09.63-.09.94s.02.64.07.94l-2.03 1.58a.49.49 0 0 0-.12.61l1.92 3.32c.12.22.37.29.59.22l2.39-.96c.5.38 1.03.7 1.62.94l.36 2.54c.05.24.24.41.48.41h3.84c.24 0 .44-.17.47-.41l.36-2.54c.59-.24 1.13-.56 1.62-.94l2.39.96c.22.08.47 0 .59-.22l1.92-3.32c.12-.22.07-.47-.12-.61l-2.01-1.58zM12 15.6A3.6 3.6 0 1 1 12 8.4a3.6 3.6 0 0 1 0 7.2z"/>
</svg>
<div class="t" style="left:557px;top:1087px;font-size:26px;color:#f4f4f4;--w:90;transform:scaleX(1.0227);transform-origin:0 50%">BLOCK</div>
<div class="t" style="left:556px;top:1116px;font-size:26px;color:#f4f4f4;--w:104;transform:scaleX(0.9043);transform-origin:0 50%">コマンド:</div>
<div class="t" style="left:556px;top:1145px;font-size:26px;color:#f4f4f4;--w:858;transform:scaleX(1.0012);transform-origin:0 50%">コーナーを指定または [フェンス(F)/ポリゴン窓(WP)/ポリゴン交差(CP)]:</div>
<svg width="2107" height="1287" style="left:0;top:0">
 <rect x="558" y="1203.5" width="27" height="26" fill="#9a9ea5"/>
 <rect x="560" y="1208.5" width="23" height="19" fill="#5c6069"/>
 <rect x="559.5" y="1204.5" width="3" height="3" fill="#44484f"/>
 <path d="M563 1213L567 1216.5L563 1220M569 1221.5H578" fill="none" stroke="#c8ccd2" stroke-width="1.4"/>
 <rect x="597" y="1204" width="1.6" height="28" fill="#b8b8b8"/>
 <path d="M1712.5 1231H1723.5L1718 1225.5Z" fill="#e0e0e0"/>
</svg>
<!--CMDEND-->
<!--STATUS-->
<svg width="2107" height="1287" style="left:0;top:0">
 <path d="M20.6 1250.5H47.2M20.6 1258.5H47.2M20.6 1266.5H47.2" stroke="#e6e6e6" stroke-width="3.2"/>
 <path d="M85.7 1242H206L194.4 1277.6H74.8Z" fill="#4a5a74"/>
 <path d="M380 1244L372 1274M555.5 1244L548 1274M614 1244L606 1274" stroke="#5f6d82" stroke-width="1.4"/>
 <path d="M580 1250V1268M571 1259H589" stroke="#f0f0f0" stroke-width="2.4"/>
 <!-- right icons -->
 <path d="M1314.5 1247V1273H1339.5" fill="none" stroke="#e6e6e6" stroke-width="2"/><path d="M1314.5 1262.5H1323.5V1273" fill="none" stroke="#4fb6ec" stroke-width="1.6"/>
 <g fill="#48627f" stroke="#4aa8ec" stroke-width="1.6">
  <rect x="1347.5" y="1243.5" width="32.5" height="34"/>
  <rect x="1384.5" y="1243.5" width="32.5" height="34"/>
  <rect x="1422" y="1243.5" width="32.5" height="34"/>
  <rect x="1496.5" y="1243.5" width="33" height="34"/>
  <rect x="1571" y="1243.5" width="33" height="34"/>
 </g>
 <circle cx="1363.5" cy="1261" r="11" fill="none" stroke="#e6e6e6" stroke-width="2.2"/>
 <path d="M1363.5 1261L1376 1251M1364 1261H1376" stroke="#4fb6ec" stroke-width="1.8"/>
 <rect x="1390" y="1251" width="21.5" height="21.5" fill="none" stroke="#f0f0f0" stroke-width="2.6"/>
 <rect x="1388" y="1248" width="9" height="9" fill="none" stroke="#e24a4a" stroke-width="1.8"/>
 <path d="M1426 1271.5H1450M1426 1271.5L1449 1250" stroke="#e6e6e6" stroke-width="1.8"/>
 <rect x="1434.5" y="1259.5" width="5" height="5" fill="none" stroke="#4fb6ec" stroke-width="1.2"/>
 <path d="M1465 1246V1272H1488M1465 1272L1479 1262" stroke="#d8d8d8" stroke-width="1.4" fill="none"/>
 <path d="M1480 1247L1475 1258H1479L1476 1266L1484 1254H1480L1484 1247Z" fill="#f5c33b"/>
 <path d="M1505 1250.5V1263M1499 1256.5H1511.5" stroke="#fff" stroke-width="2"/>
 <rect x="1507.5" y="1262.5" width="18" height="7.5" fill="none" stroke="#4fb6ec" stroke-width="2"/>
 <path d="M1539.4 1252H1561.6M1539.4 1260H1561.6" stroke="#fff" stroke-width="3"/><path d="M1539.4 1268.5H1561.6" stroke="#fff" stroke-width="5"/>
 <rect x="1575.5" y="1248" width="24" height="25" fill="#8fcdf5" stroke="#e8e8e8" stroke-width="2.2"/><rect x="1578.5" y="1251" width="18" height="19" fill="#8fcdf5" stroke="#48627f" stroke-width="1"/>
 <path d="M1621 1247V1261M1614 1254H1628" stroke="#fff" stroke-width="1.8"/>
 <rect x="1624.5" y="1258.5" width="9.5" height="9.5" fill="none" stroke="#fff" stroke-width="1.6"/>
 <rect x="1628" y="1263" width="9" height="9" fill="#2d333c" stroke="#4fb6ec" stroke-width="1.8"/>
 <rect x="1648" y="1263" width="13" height="12.5" fill="#c8c8c8"/>
 <rect x="1662" y="1247" width="13" height="13" fill="#5cb9f6"/>
 <path d="M1661.5 1260V1275.5" stroke="#f5c33b" stroke-width="1.4"/>
 <rect x="1686.5" y="1247.5" width="26" height="25" fill="none" stroke="#4fb6ec" stroke-width="1.6"/>
 <path d="M1686.5 1245V1275M1712.5 1245V1275" stroke="#4fb6ec" stroke-width="2.4"/>
 <text x="1699.5" y="1265.5" font-size="15" fill="#4fb6ec" text-anchor="middle" font-family="Liberation Sans">0.0</text>
 <path d="M1858.4 1254H1874.5L1866.5 1262Z" fill="#f0f0f0"/>
 <path d="M1902 1247L1890 1275H1897L1902 1265L1907 1275H1915Z" fill="#5cb9f6"/>
 <path d="M1896 1253L1905 1250L1898 1258L1908 1256" fill="none" stroke="#dfe8f2" stroke-width="1.6"/>
 <circle cx="1946" cy="1253.5" r="6.5" fill="none" stroke="#e0e0e0" stroke-width="1.6"/>
 <path d="M1928 1254.5H1939V1267.5H1928Z" fill="none" stroke="#e0e0e0" stroke-width="1.6"/>
 <path d="M1944 1260L1951 1267L1944 1274L1937 1267Z" fill="#2d333c" stroke="#e0e0e0" stroke-width="1.6"/>
 <path d="M1989 1263.2v-4.4l-3-0.5a9.5 9.5 0 0 0-1.2-2.9l1.8-2.5-3.1-3.1-2.5 1.8a9.5 9.5 0 0 0-2.9-1.2l-0.5-3h-4.4l-0.5 3a9.5 9.5 0 0 0-2.9 1.2l-2.5-1.8-3.1 3.1 1.8 2.5a9.5 9.5 0 0 0-1.2 2.9l-3 0.5v4.4l3 0.5a9.5 9.5 0 0 0 1.2 2.9l-1.8 2.5 3.1 3.1 2.5-1.8a9.5 9.5 0 0 0 2.9 1.2l0.5 3h4.4l0.5-3a9.5 9.5 0 0 0 2.9-1.2l2.5 1.8 3.1-3.1-1.8-2.5a9.5 9.5 0 0 0 1.2-2.9Z M1976.6 1265.5a4.5 4.5 0 1 1 0-9 4.5 4.5 0 0 1 0 9Z" fill="#5cb9f6" fill-rule="evenodd"/>
 <path d="M2002 1257V1247H2012M2002 1247L2011 1256M2026.5 1257V1247H2016.5M2026.5 1247L2017.5 1256M2002 1264V1274H2012M2002 1274L2011 1265M2026.5 1264V1274H2016.5M2026.5 1274L2017.5 1265" fill="none" stroke="#f0f0f0" stroke-width="2"/>
 <path d="M2039 1248.5H2064M2039 1260.5H2064M2039 1272.5H2064" stroke="#5cb9f6" stroke-width="3.6"/>
 <path d="M2101 1265L2088 1279M2101 1271L2094 1279M2101 1276.5L2099 1279" stroke="#9aa0a8" stroke-width="1.6"/>
</svg>
<div class="t" style="left:108px;top:1248px;font-size:21px;font-weight:bold;color:#f4f4f4;--w:64;transform:scaleX(0.9697);transform-origin:0 50%">モデル</div>
<div class="t" style="left:228.6px;top:1248px;font-size:21px;color:#e6e6e6;--w:119;transform:scaleX(0.9754);transform-origin:0 50%">レイアウト1</div>
<div class="t" style="left:404.6px;top:1248px;font-size:21px;color:#e6e6e6;--w:119;transform:scaleX(0.9754);transform-origin:0 50%">レイアウト2</div>
<div class="t" style="left:1722.4px;top:1248px;font-size:20px;color:#8f949b;--w:121;transform:scaleX(1.0083);transform-origin:0 50%">ミリメートル</div>

<script>
document.querySelectorAll('.t').forEach(function(e){
 var w=parseFloat(getComputedStyle(e).getPropertyValue('--w'));
 if(w){var r=e.offsetWidth; if(r>0){e.style.transformOrigin='0 50%';e.style.transform='scaleX('+(w/r)+')';}}
});
</script>
</body></html>
